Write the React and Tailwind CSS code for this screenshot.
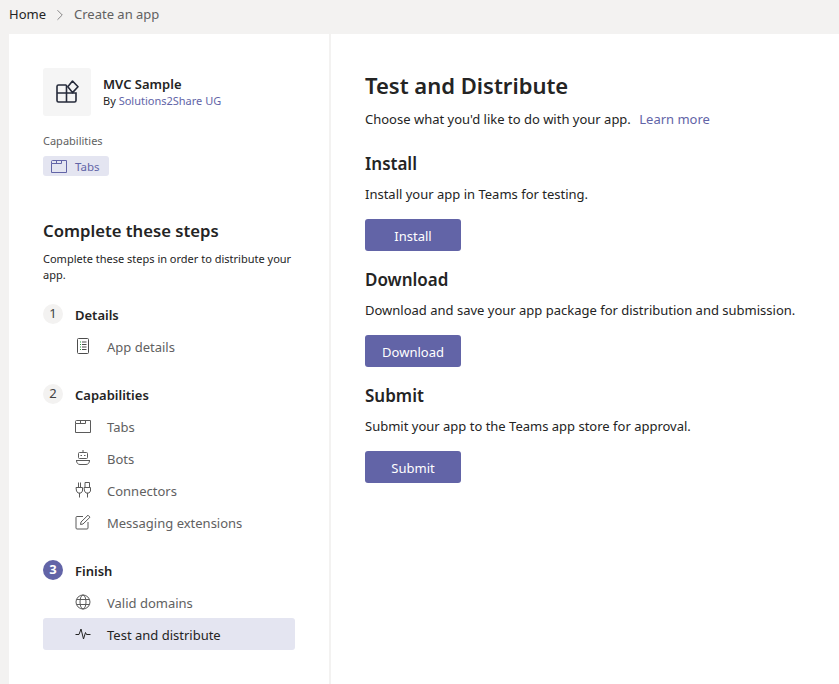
import { ChevronRight } from 'lucide-react';

const font = { fontFamily: '"Noto Sans", sans-serif' };

function AppIcon() {
  return (
    <svg width="24" height="24" viewBox="0 0 24 24" fill="none" stroke="#252a3a" strokeWidth="1.600">
      <path d="M11.500 5H3.500A1.500 1.500 0 0 0 2 6.500V20.500A1.500 1.500 0 0 0 3.500 22H19.500A1.500 1.500 0 0 0 21 20.500V13H2M11.500 5V22" />
      <path d="M17.500 1 23 6.800 17.500 12.600 12.800 6.800z" strokeLinejoin="round" />
    </svg>
  );
}

function TabsIcon({ color = '#5b5b5b' }) {
  return (
    <svg width="16" height="14" viewBox="0 0 16 14" fill="none" stroke={color} strokeWidth="1">
      <path d="M0.500 4.500V13.500H15.500V1.500H1.500A1 1 0 0 0 0.500 2.500V4.500H10.500V1.500" />
      <path d="M5.500 1.500V4.500" />
    </svg>
  );
}

function DetailsIcon() {
  return (
    <svg width="14" height="16" viewBox="0 0 14 16" fill="none" strokeWidth="1">
      <rect x="1.500" y="0.500" width="11" height="15" rx="1" stroke="#4d4d4d" />
      <path d="M4 4h1M4 6.500h1M4 9h1M4 11.500h1" stroke="#22a33a" />
      <path d="M6 4h4.500M6 6.500h4.500M6 9h4.500M6 11.500h4.500" stroke="#4d4d4d" />
    </svg>
  );
}

function BotIcon() {
  return (
    <svg width="16" height="16" viewBox="0 0 16 16" fill="none" stroke="#5b5b5b" strokeWidth="1">
      <path d="M8 0v2" />
      <rect x="3.500" y="2.500" width="9" height="6" rx="1" />
      <path d="M5.500 5.500h1.500M9 5.500h1.500" />
      <path d="M1 10.500h14M1.500 10.500c0 2.500 1.500 4 3.500 4h6c2 0 3.500-1.500 3.500-4" />
    </svg>
  );
}

function ConnectorIcon() {
  return (
    <svg width="16" height="16" viewBox="0 0 16 16" fill="none" stroke="#5b5b5b" strokeWidth="1">
      <path d="M3.500 0.500v5M5.500 0.500v5M1 5.500h6.500v3.500l-1.500 2h-3l-1.500-2zM4.500 11v4.500" />
      <path d="M10 5.500V0.500h4.500v5M9 5.500h6.500v3.500l-1.500 2h-3l-1.500-2zM12.500 11v4.500" />
    </svg>
  );
}

function PenIcon() {
  return (
    <svg width="16" height="16" viewBox="0 0 16 16" fill="none" stroke="#5b5b5b" strokeWidth="1">
      <path d="M8 2.500H2A1 1 0 0 0 1 3.500V14a1 1 0 0 0 1 1h10a1 1 0 0 0 1-1V8" />
      <path d="M5.500 10.500 6 8l7-6.800 2 2L8 10z" strokeLinejoin="round" />
    </svg>
  );
}

function GlobeIcon() {
  return (
    <svg width="16" height="16" viewBox="0 0 16 16" fill="none" stroke="#5b5b5b" strokeWidth="1">
      <circle cx="8" cy="8" r="7" />
      <ellipse cx="8" cy="8" rx="3" ry="7" />
      <path d="M1.500 5.500h13M1.500 10.500h13" />
    </svg>
  );
}

function PulseIcon() {
  return (
    <svg width="16" height="16" viewBox="0 0 16 16" fill="none" stroke="#242424" strokeWidth="1">
      <path d="M0.500 8.500H4L6 3 8.500 13 10.500 6.500 11.500 8.500H15.500" />
    </svg>
  );
}

function Step({ n, title, active }) {
  return (
    <div className="flex items-center h-5 text-[13px] font-semibold text-[#242424]">
      <span className={active
        ? 'w-5 h-5 rounded-full bg-[#6264a7] text-white flex items-center justify-center text-[13px] font-bold'
        : 'w-5 h-5 rounded-full bg-[#f3f2f1] text-[#424242] flex items-center justify-center text-[13px] font-normal'}>
        {n}
      </span>
      <span className="ml-3 pt-[4px]">{title}</span>
    </div>
  );
}

function Item({ icon, label, active }) {
  return (
    <div className={active
      ? 'flex items-center h-8 pl-8 rounded-[3px] bg-[#e4e5f1] text-[#242424] text-[13px]'
      : 'flex items-center h-8 pl-8 text-[#616161] text-[13px]'}>
      <span className="w-4 flex justify-center">{icon}</span>
      <span className="ml-4 pt-[4px]">{label}</span>
    </div>
  );
}

function Section({ title, text, button }) {
  return (
    <div>
      <h2 className="text-[17px] leading-6 font-semibold text-[#242424]">{title}</h2>
      <p className="mt-[8px] text-[13px] leading-[20px] text-[#242424]">{text}</p>
      <button className="mt-[15px] w-24 h-8 pt-[4px] rounded-[3px] bg-[#6264a7] text-white text-[13px] flex items-center justify-center">
        {button}
      </button>
    </div>
  );
}

export default function App() {
  return (
    <div className="h-[684px] bg-[#f3f2f1] flex flex-col overflow-hidden" style={font}>
      <div className="h-[34px] shrink-0 flex items-center pl-[9px] pb-[4px] text-[13px]">
        <span className="text-[#242424]">Home</span>
        <ChevronRight size={18} strokeWidth={1} className="mx-[5px] text-[#616161]" />
        <span className="text-[#616161]">Create an app</span>
      </div>
      <div className="flex flex-1 pl-[9px]">
        <aside className="w-[320px] bg-white pt-[34px] pl-[34px] pr-[34px]">
          <div className="flex items-center">
            <div className="w-12 h-12 rounded-[3px] bg-[#f5f5f5] flex items-center justify-center">
              <AppIcon />
            </div>
            <div className="ml-3">
              <div className="text-[13px] leading-[18px] font-semibold text-[#242424]">MVC Sample</div>
              <div className="text-[11px] leading-[16px] text-[#242424]">
                By <span className="text-[#6264a7]">Solutions2Share UG</span>
              </div>
            </div>
          </div>
          <div className="mt-[17px] text-[11px] leading-4 text-[#616161]">Capabilities</div>
          <div className="mt-[7px] w-[66px] h-5 rounded-[3px] bg-[#e4e5f1] flex items-center pl-2 text-[11.500px] text-[#6264a7]">
            <TabsIcon color="#6264a7" />
            <span className="ml-[8px] pt-[2px]">Tabs</span>
          </div>

          <h2 className="mt-[43px] text-[16.700px] leading-6 font-semibold text-[#242424]">Complete these steps</h2>
          <p className="mt-[8px] text-[11px] leading-4 text-[#242424]">
            Complete these steps in order to distribute your app.
          </p>

          <div className="mt-[21px]">
            <Step n="1" title="Details" />
            <div className="mt-[6px]">
              <Item icon={<DetailsIcon />} label="App details" />
            </div>
          </div>
          <div className="mt-[22px]">
            <Step n="2" title="Capabilities" />
            <div className="mt-[6px]">
              <Item icon={<TabsIcon />} label="Tabs" />
              <Item icon={<BotIcon />} label="Bots" />
              <Item icon={<ConnectorIcon />} label="Connectors" />
              <Item icon={<PenIcon />} label="Messaging extensions" />
            </div>
          </div>
          <div className="mt-[22px]">
            <Step n="3" title="Finish" active />
            <div className="mt-[6px]">
              <Item icon={<GlobeIcon />} label="Valid domains" />
              <Item icon={<PulseIcon />} label="Test and distribute" active />
            </div>
          </div>
        </aside>
        <main className="ml-[2px] flex-1 bg-white pl-[34px] pt-[35px]">
          <h1 className="text-[22px] leading-8 font-semibold text-[#242424]">Test and Distribute</h1>
          <p className="mt-[8px] text-[13px] leading-5 text-[#242424]">
            Choose what you'd like to do with your app. <span className="ml-[5px] text-[#6264a7]">Learn more</span>
          </p>
          <div className="mt-[23px] flex flex-col gap-[17px]">
            <Section title="Install" text="Install your app in Teams for testing." button="Install" />
            <Section title="Download" text="Download and save your app package for distribution and submission." button="Download" />
            <Section title="Submit" text="Submit your app to the Teams app store for approval." button="Submit" />
          </div>
        </main>
      </div>
    </div>
  );
}
